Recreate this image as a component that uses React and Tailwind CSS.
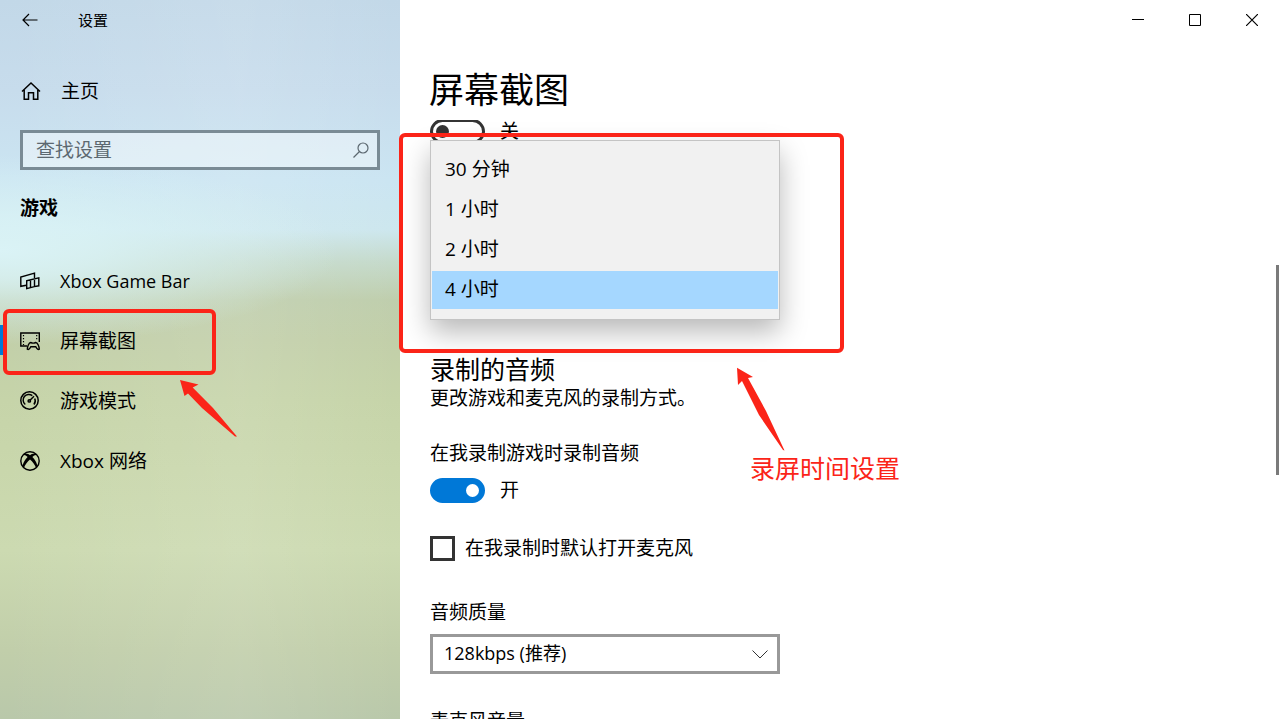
import React, { useState } from 'react';

const navItems = [
  { id: 'gamebar', label: 'Xbox Game Bar', Icon: GameBarIcon, size: 'text-[18px]' },
  { id: 'captures', label: '屏幕截图', Icon: CapturesIcon },
  { id: 'gamemode', label: '游戏模式', Icon: GaugeIcon },
  { id: 'network', label: 'Xbox 网络', Icon: XboxIcon },
];

const durations = ['30 分钟', '1 小时', '2 小时', '4 小时'];

function BackIcon() {
  return (
    <svg width="16" height="14" viewBox="0 0 16 14" fill="none" stroke="currentColor" strokeWidth="1.2">
      <path d="M15.5 7H1M7 1L1 7l6 6" />
    </svg>
  );
}

function HomeIcon() {
  return (
    <svg width="20" height="20" viewBox="0 0 20 20" fill="none" stroke="currentColor" strokeWidth="1.5">
      <path d="M1 10.5L10 2l9 8.500M3.200 9v9.200h4.300v-6.400h5v6.400h4.300V9" />
    </svg>
  );
}

function SearchIcon() {
  return (
    <svg width="16" height="16" viewBox="0 0 16 16" fill="none" stroke="currentColor" strokeWidth="1.2">
      <circle cx="10" cy="6" r="5" />
      <path d="M6.500 9.500L.5 15.500" />
    </svg>
  );
}

function GameBarIcon() {
  return (
    <svg width="20" height="20" viewBox="0 0 20 20" fill="none" stroke="currentColor" strokeWidth="1.4">
      <path d="M6.500 14.300L.8 15.300V6L14.500 2.200v4.800" />
      <path d="M6.700 9.800L18.800 6.800v8l-4.500.8-7.600 2zM10.500 9v7.500M14.500 7.800v8" />
    </svg>
  );
}

function CapturesIcon() {
  return (
    <svg width="20" height="20" viewBox="0 0 20 20" fill="none" stroke="currentColor" strokeWidth="1.4">
      <path d="M7 15H.8V2h18.500v9" />
      <path d="M3.500 4v10M16.700 4v5" strokeWidth="1.2" strokeDasharray="1.200 1.800" />
      <path d="M10.700 11.500c1.500.7 3.500.7 5 0 2 0 3.600 4.500 3.600 6.700-1.300.8-2.500-.5-3.500-2.500h-5c-1 2-2.200 3.300-3.500 2.500 0-2.200 1.500-6.700 3.400-6.700z" />
    </svg>
  );
}

function GaugeIcon() {
  return (
    <svg width="20" height="20" viewBox="0 0 20 20" fill="none" stroke="currentColor" strokeWidth="1.5">
      <circle cx="9.500" cy="9.500" r="8.700" />
      <path d="M5.300 13.500a5.600 5.600 0 0 1 7-8.900M14.700 7.500a5.600 5.600 0 0 1-.8 6M10 9.200L14 5.200" />
      <circle cx="9.300" cy="9.900" r="1.200" />
    </svg>
  );
}

function XboxIcon() {
  return (
    <svg width="20" height="20" viewBox="0 0 20 20" fill="none" stroke="currentColor" strokeWidth="1.4">
      <circle cx="10" cy="10" r="9.200" />
      <path
        d="M4 3C6.200 1.900 8.500 3.200 10 4.200c1.500-1 3.800-2.300 6-1.200l.8 1.200c-1.600-.4-3.200.6-4.400 1.900 2.400 2.500 5 6.500 4.900 9.400l-1.300 1.600C15.300 14 12.500 10.500 10 8.500 7.500 10.500 4.700 14 4 17.100l-1.300-1.600C2.600 12.600 5.200 8.600 7.600 6.100 6.400 4.800 4.800 3.800 3.200 4.200z"
        fill="currentColor"
        stroke="none"
      />
    </svg>
  );
}

function Toggle({ checked, onChange, label }) {
  return (
    <label className="flex h-[26px] items-center gap-[15px]">
      <input
        type="checkbox"
        role="switch"
        aria-label={label}
        checked={checked}
        onChange={onChange}
        className="relative h-[25px] w-[55px] appearance-none rounded-full border-[3px] border-[#333] bg-white before:absolute before:top-[3px] before:left-[3px] before:size-[13px] before:rounded-full before:bg-[#333] checked:border-[#0078d7] checked:bg-[#0078d7] checked:before:left-[33px] checked:before:bg-white"
      />
      <span>{checked ? '开' : '关'}</span>
    </label>
  );
}

function Sidebar({ active, onSelect }) {
  return (
    <aside className="flex w-[400px] shrink-0 flex-col bg-[radial-gradient(ellipse_340px_95px_at_0px_250px,#daf3f6_0%,#daf3f6cc_30%,#daf3f600_100%),linear-gradient(90deg,#ffffff00_0%,#ffffff1a_60%,#ffffff00_100%),linear-gradient(180deg,#c2d8e8_0px,#c7dcec_90px,#cbe5f2_180px,#cde7ee_230px,#c5dacb_262px,#bfcead_300px,#c2cfa9_340px,#c6d4a9_400px,#c9d7ac_470px,#ccdab1_550px,#c1ceaa_650px,#b9c8aa_719px)]">
      <header className="flex h-10 items-center text-[15px]">
        <button aria-label="返回" className="flex w-[60px] justify-center">
          <BackIcon />
        </button>
        <span className="ml-[18px]">设置</span>
      </header>
      <a href="#home" className="mt-[21px] flex h-[60px] items-center gap-5 pl-[21px]">
        <HomeIcon />
        主页
      </a>
      <div className="mx-5 mt-[9px] flex h-10 items-center border-[3px] border-[#7a8b95] bg-white/40 pr-2 text-[#5c6870]">
        <input
          type="text"
          aria-label="查找设置"
          placeholder="查找设置"
          className="min-w-0 flex-1 bg-transparent pl-[13px] outline-none placeholder:text-[#5c6870]"
        />
        <SearchIcon />
      </div>
      <h2 className="flex h-[75px] items-center pl-5 font-bold">游戏</h2>
      <nav className="mt-[6px]">
        {navItems.map(({ id, label, Icon, size = '' }) => (
          <div key={id} className="relative">
            {active === id && <span className="absolute top-[14px] left-0 h-[30px] w-1 bg-[#0078d7]" />}
            <a href={`#${id}`} onClick={() => onSelect(id)} className="flex h-[60px] items-center gap-5 pl-5">
              <Icon />
              <span className={size}>{label}</span>
            </a>
            {id === 'captures' && (
              <>
                <div className="absolute -top-[2px] left-[3px] h-[66px] w-[213px] rounded-md border-4 border-[#fb2418]" />
                <svg className="absolute top-[68px] left-[179px]" width="60" height="60" viewBox="179 379 60 60">
                  <path d="M180 380L198.500 384.500 192.700 387.500 213 408 237 436.500 235 436.500 202 408 188 393.500 184.500 396z" fill="#fb2418" />
                </svg>
              </>
            )}
          </div>
        ))}
      </nav>
    </aside>
  );
}

function WindowButtons() {
  return (
    <header className="flex h-10 shrink-0 justify-end pr-px">
      <button aria-label="最小化" className="flex w-[57px] items-center justify-center">
        <svg width="12" height="12" viewBox="0 0 12 12" stroke="black">
          <path d="M0 5.500h12" />
        </svg>
      </button>
      <button aria-label="最大化" className="flex w-[57px] items-center justify-center">
        <svg width="12" height="12" viewBox="0 0 12 12" fill="none" stroke="black">
          <path d="M.5.500h11v11H.5z" />
        </svg>
      </button>
      <button aria-label="关闭" className="flex w-[57px] items-center justify-center">
        <svg width="12" height="12" viewBox="0 0 12 12" stroke="black" strokeWidth="1.200">
          <path d="M0 0l12 12M12 0L0 12" />
        </svg>
      </button>
    </header>
  );
}

function DurationMenu({ value, onChange }) {
  return (
    <div className="absolute top-[20px] left-[30px] w-[350px]">
      <ul
        role="listbox"
        aria-label="录制时间"
        className="border border-[#c4c4c4] bg-[#f1f1f1] px-px py-[9px] shadow-[0_12px_26px_rgba(0,0,0,0.28)]"
      >
        {durations.map((d) => (
          <li key={d} role="option" aria-selected={d === value} className="py-px">
            <button
              onClick={() => onChange(d)}
              className={`block h-[38px] w-full pb-[2px] pl-[13px] text-left ${d === value ? 'bg-[#a5d7ff]' : ''}`}
            >
              {d}
            </button>
          </li>
        ))}
      </ul>
      <div className="pointer-events-none absolute -top-[7px] -left-[31px] h-[220px] w-[445px] rounded-md border-4 border-[#fb2418]" />
      <svg className="absolute top-[226px] left-[306px]" width="50" height="86" viewBox="736 366 50 86">
        <path d="M737 367.700L753 377 748 378 766 411 784.500 450.500 783 450 759 415 742 381 738 385z" fill="#fb2418" />
      </svg>
      <p className="absolute top-[313px] left-[320px] text-[25px] leading-[30px] whitespace-nowrap text-[#fb2418]">录屏时间设置</p>
    </div>
  );
}

export default function App() {
  const [active, setActive] = useState('captures');
  const [duration, setDuration] = useState('4 小时');
  const [background, setBackground] = useState(false);
  const [audio, setAudio] = useState(true);
  const [mic, setMic] = useState(false);

  return (
    <div className="flex h-screen overflow-hidden bg-white font-['Open_Sans','Noto_Sans_CJK_SC',sans-serif] text-[19px] leading-[28px] text-black">
      <Sidebar active={active} onSelect={setActive} />
      <main className="flex min-w-0 flex-1 flex-col">
        <WindowButtons />
        <h1 className="flex h-20 shrink-0 items-center pt-5 pl-[29px] text-[35px]">屏幕截图</h1>
        <div className="relative min-h-0 flex-1">
          <div className="h-full overflow-hidden pl-[30px]">
            <div className="-mt-[2px]">
              <Toggle checked={background} onChange={() => setBackground(!background)} label="后台录制" />
            </div>
            <h2 className="mt-[210px] text-[25px] leading-[30px]">录制的音频</h2>
            <p>更改游戏和麦克风的录制方式。</p>
            <p className="mt-[27px] mb-[10px]">在我录制游戏时录制音频</p>
            <Toggle checked={audio} onChange={() => setAudio(!audio)} label="在我录制游戏时录制音频" />
            <label className="mt-[31px] flex items-center gap-[10px]">
              <input
                type="checkbox"
                checked={mic}
                onChange={() => setMic(!mic)}
                className="size-[25px] appearance-none border-[3px] border-[#333] checked:bg-[#0078d7]"
              />
              在我录制时默认打开麦克风
            </label>
            <label htmlFor="quality" className="mt-[36px] block">音频质量</label>
            <div className="relative mt-2 w-[350px]">
              <select
                id="quality"
                className="h-10 w-full appearance-none border-[3px] border-[#999] bg-white pb-[2px] pl-[11px] text-[18px]"
              >
                <option>128kbps (推荐)</option>
                <option>192kbps</option>
              </select>
              <svg className="pointer-events-none absolute top-4 right-3" width="16" height="9" viewBox="0 0 16 9" fill="none" stroke="#333">
                <path d="M.5.500L8 8 15.500.500" />
              </svg>
            </div>
            <p className="mt-[33px]">麦克风音量</p>
          </div>
          <DurationMenu value={duration} onChange={setDuration} />
          <div className="absolute top-[145px] right-[2px] h-[210px] w-[3px] bg-[#7a7a7a]" />
        </div>
      </main>
    </div>
  );
}
